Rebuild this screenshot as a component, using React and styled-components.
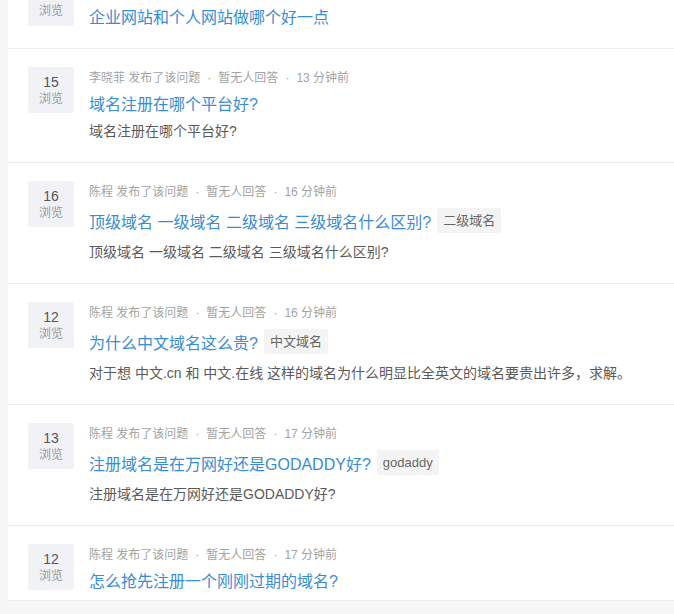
import styled, { createGlobalStyle } from "styled-components"

const GlobalStyle = createGlobalStyle`
    html, body {
        margin: 0;
        padding: 0;
        background: #f7f7f7;
    }
    body {
        font-family: "Liberation Sans", "Noto Sans CJK SC", sans-serif;
    }
`

const questions = [
    { views: "", author: "", title: "企业网站和个人网站做哪个好一点", desc: "", partial: true },
    { views: 15, author: "李晓菲", time: "13 分钟前", title: "域名注册在哪个平台好?", desc: "域名注册在哪个平台好?" },
    { views: 16, author: "陈程", time: "16 分钟前", title: "顶级域名 一级域名 二级域名 三级域名什么区别?", tag: "二级域名", desc: "顶级域名 一级域名 二级域名 三级域名什么区别?" },
    { views: 12, author: "陈程", time: "16 分钟前", title: "为什么中文域名这么贵?", tag: "中文域名", desc: "对于想 中文.cn 和 中文.在线 这样的域名为什么明显比全英文的域名要贵出许多，求解。" },
    { views: 13, author: "陈程", time: "17 分钟前", title: "注册域名是在万网好还是GODADDY好?", tag: "godaddy", desc: "注册域名是在万网好还是GODADDY好?" },
    { views: 12, author: "陈程", time: "17 分钟前", title: "怎么抢先注册一个刚刚过期的域名?", desc: "", last: true },
]

export default function App() {
    return (
        <>
            <GlobalStyle />
            <Page>
                <List>
                    {questions.map((q, i) => q.partial ? (
                        <TopItem key={i}>
                            <Views $clipped>
                                <span className="label">浏览</span>
                            </Views>
                            <Body>
                                <TitleRow $short>
                                    <Title>{q.title}</Title>
                                </TitleRow>
                            </Body>
                        </TopItem>
                    ) : (
                        <Item key={i} $last={q.last}>
                            <Views>
                                <span className="num">{q.views}</span>
                                <span className="label">浏览</span>
                            </Views>
                            <Body>
                                <Meta>
                                    {q.author} 发布了该问题<Dot>·</Dot>暂无人回答<Dot>·</Dot>{q.time}
                                </Meta>
                                <TitleRow>
                                    <Title>{q.title}</Title>
                                    {q.tag && <Tag>{q.tag}</Tag>}
                                </TitleRow>
                                {q.desc && <Desc>{q.desc}</Desc>}
                            </Body>
                        </Item>
                    ))}
                </List>
            </Page>
        </>
    )
}

const Page = styled.div`
    width: 100%;
    height: 614px;
    overflow: hidden;
    padding-left: 8px;
    box-sizing: border-box;
`

const List = styled.div`
    background: #fff;
    border-bottom: 1px solid #ebedf0;
    margin-top: -1px;
`

const Item = styled.div`
    display: flex;
    gap: 15px;
    padding: 18px 20px ${p => p.$last ? "6px" : "20px"} 20px;
    border-bottom: ${p => p.$last ? "none" : "1px solid #eaeef3"};
`

const TopItem = styled(Item)`
    padding: 0 20px 18px 20px;
    margin-top: -20px;
`

const Views = styled.div`
    flex: 0 0 46px;
    width: 46px;
    height: 46px;
    background: #f1f2f6;
    border-radius: 2px;
    display: flex;
    flex-direction: column;
    align-items: center;
    justify-content: ${p => p.$clipped ? "flex-end" : "flex-start"};
    padding-bottom: ${p => p.$clipped ? "6px" : "0"};
    box-sizing: border-box;

    .num {
        font-size: 14px;
        color: #555;
        line-height: 16px;
        margin-top: 7px;
    }

    .label {
        font-size: 12px;
        color: #999;
        line-height: 18px;
    }
`

const Body = styled.div`
    display: flex;
    flex-direction: column;
    min-width: 0;
`

const Meta = styled.div`
    font-size: 12px;
    line-height: 22px;
    color: #a3a3a3;
    white-space: nowrap;
`

const Dot = styled.span`
    padding: 0 7px;
`

const TitleRow = styled.div`
    display: flex;
    align-items: center;
    min-height: 28px;
    margin-top: ${p => p.$short ? "22px" : "0"};
`

const Title = styled.span`
    font-size: 16px;
    color: #3a8bd6;
    white-space: nowrap;
`

const Tag = styled.span`
    height: 25px;
    line-height: 25px;
    padding: 0 6px;
    margin: 5px 0 5px 6px;
    background: #f4f4f4;
    border-radius: 2px;
    font-size: 13px;
    color: #666;
    white-space: nowrap;
`

const Desc = styled.div`
    margin-top: 3px;
    font-size: 14px;
    line-height: 22px;
    color: #5a5a5a;
    white-space: nowrap;
`
